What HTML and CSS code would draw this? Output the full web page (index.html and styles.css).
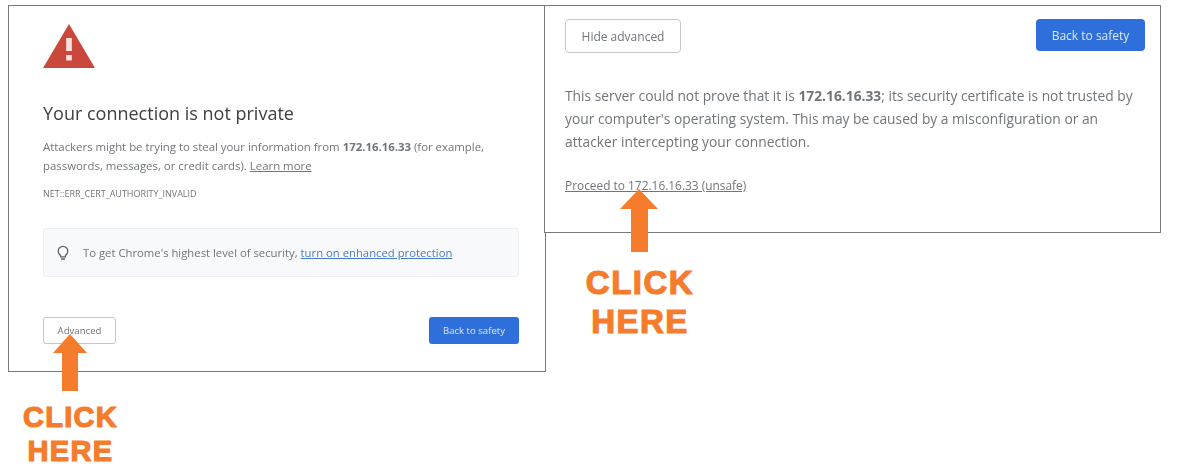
FILE: index.html
```html
<html lang="en">

<head>
    <meta charset="UTF-8">
    <meta name="viewport" content="width=device-width, initial-scale=1.0">
    <title>Your connection is not private</title>
    <link rel="stylesheet" href="styles.css">
</head>

<body>
    <div class="steps">
        <!-- Step 1 -->
        <div class="step step-one">
            <section class="panel panel-warning">
                <svg class="warning-icon" viewBox="0 0 52 44" aria-hidden="true">
                    <path d="M26 0 L52 44 L0 44 Z" fill="#c9483b" />
                    <rect x="23.2" y="14" width="5.6" height="13" fill="#f6e3e0" />
                    <rect x="23.2" y="31" width="5.6" height="5.5" fill="#f6e3e0" />
                </svg>
                <h1>Your connection is not private</h1>
                <p class="message">Attackers might be trying to steal your information from <b>172.16.16.33</b> (for example, passwords, messages, or credit cards). <a href="#">Learn more</a></p>
                <p class="error-code">NET::ERR_CERT_AUTHORITY_INVALID</p>
                <div class="tip">
                    <svg class="bulb-icon" viewBox="0 0 12 16" aria-hidden="true">
                        <path d="M3.6 10.6 C2.2 9.6 1.2 8.2 1.2 6.2 A4.8 4.8 0 0 1 10.8 6.2 C10.8 8.2 9.8 9.6 8.4 10.6 L8.4 11.8 L3.6 11.8 Z" fill="none" stroke="#5f6368" stroke-width="1.3" />
                        <path d="M4 14 L8 14" stroke="#5f6368" stroke-width="1.5" />
                    </svg>
                    <span>To get Chrome's highest level of security, <a href="#" class="blue-link">turn on enhanced protection</a></span>
                </div>
                <div class="actions">
                    <button class="btn btn-plain">Advanced</button>
                    <button class="btn btn-blue">Back to safety</button>
                </div>
            </section>
            <svg class="arrow arrow-one" viewBox="0 0 34 57" aria-hidden="true">
                <path d="M17 0 L34 19 L25 19 L25 57 L9 57 L9 19 L0 19 Z" fill="#f57c2c" />
            </svg>
            <div class="click-here click-here-one">CLICK<br>HERE</div>
        </div>

        <!-- Step 2 -->
        <div class="step step-two">
            <section class="panel panel-advanced">
                <div class="actions actions-top">
                    <button class="btn btn-plain btn-large">Hide advanced</button>
                    <button class="btn btn-blue btn-large">Back to safety</button>
                </div>
                <p class="details">This server could not prove that it is <b>172.16.16.33</b>; its security certificate is not trusted by your computer's operating system. This may be caused by a misconfiguration or an attacker intercepting your connection.</p>
                <a href="#" class="proceed">Proceed to 172.16.16.33 (unsafe)</a>
            </section>
            <svg class="arrow arrow-two" viewBox="0 0 38 63" aria-hidden="true">
                <path d="M19 0 L38 20 L28 20 L28 63 L11 63 L11 20 L0 20 Z" fill="#f57c2c" />
            </svg>
            <div class="click-here click-here-two">CLICK<br>HERE</div>
        </div>
    </div>
</body>

</html>
```

FILE: styles.css
```css
/* Global Styles */
body {
    font-family: 'Open Sans', 'Liberation Sans', sans-serif;
    margin: 0;
    padding: 0;
    background-color: #fff;
    color: #70757a;
    overflow: hidden;
}

a {
    color: inherit;
}

/* Two screenshots side by side */
.steps {
    display: flex;
    align-items: flex-start;
    padding: 5px 0 0 8px;
}

.step {
    position: relative;
}

.step-one {
    width: 538px;
}

.step-two {
    width: 617px;
    margin-left: -2px;
}

.panel {
    box-sizing: border-box;
    border: 1px solid #77797c;
    background-color: #fff;
    filter: blur(0.35px);
}

/* Left panel */
.panel-warning {
    height: 367px;
    padding: 18px 26px 0 34px;
}

.warning-icon {
    display: block;
    width: 52px;
    height: 44px;
}

.panel-warning h1 {
    margin: 30px 0 0;
    font-size: 18px;
    line-height: 30px;
    font-weight: 400;
    color: #3c4043;
}

.message {
    margin: 9px 0 0;
    font-size: 11.4px;
    line-height: 19px;
}

.error-code {
    margin: 9px 0 0;
    font-size: 9px;
    line-height: 19px;
}

.tip {
    box-sizing: border-box;
    display: flex;
    align-items: center;
    gap: 14px;
    height: 49px;
    margin-top: 25px;
    padding-left: 13px;
    font-size: 11.3px;
    background-color: #f8f9fb;
    border: 1px solid #eeeff2;
    border-radius: 3px;
}

.bulb-icon {
    width: 12px;
    height: 16px;
}

.blue-link {
    color: #4a78c9;
}

.actions {
    display: flex;
    justify-content: space-between;
    align-items: flex-start;
    margin-top: 40px;
}

.actions-top {
    margin-top: 0;
}

/* Buttons */
.btn {
    box-sizing: border-box;
    height: 27px;
    padding: 0;
    font-family: inherit;
    font-size: 9.6px;
    border-radius: 3px;
}

.btn-plain {
    width: 73px;
    background-color: #fff;
    color: #70757a;
    border: 1px solid #c4c7ca;
}

.btn-blue {
    width: 90px;
    background-color: #2f6fdc;
    color: #dce8fb;
    border: none;
}

.btn-large {
    font-size: 12px;
    border-radius: 4px;
}

.btn-large.btn-plain {
    width: 116px;
    height: 34px;
}

.btn-large.btn-blue {
    width: 109px;
    height: 32px;
}

/* Right panel */
.panel-advanced {
    height: 228px;
    padding: 13px 15px 0 20px;
}

.details {
    margin: 31px 0 0;
    font-size: 13.8px;
    line-height: 23.2px;
}

.proceed {
    display: block;
    margin-top: 22px;
    font-size: 11.9px;
    line-height: 18px;
}

/* Orange call-outs laid over the screenshots */
.arrow {
    position: absolute;
}

.arrow-one {
    left: 45px;
    top: 329px;
    width: 34px;
    height: 57px;
}

.arrow-two {
    left: 76px;
    top: 184px;
    width: 38px;
    height: 63px;
}

.click-here {
    position: absolute;
    text-align: center;
    font-family: 'Liberation Sans', Arial, sans-serif;
    font-weight: 700;
    color: #f57c2c;
    -webkit-text-stroke: 1.2px #f57c2c;
}

.click-here-one {
    left: 0;
    top: 395px;
    width: 125px;
    font-size: 29px;
    line-height: 34px;
    letter-spacing: 1.3px;
}

.click-here-two {
    left: 26px;
    top: 259px;
    width: 140px;
    font-size: 33px;
    line-height: 38.5px;
    letter-spacing: 1.5px;
}
```
